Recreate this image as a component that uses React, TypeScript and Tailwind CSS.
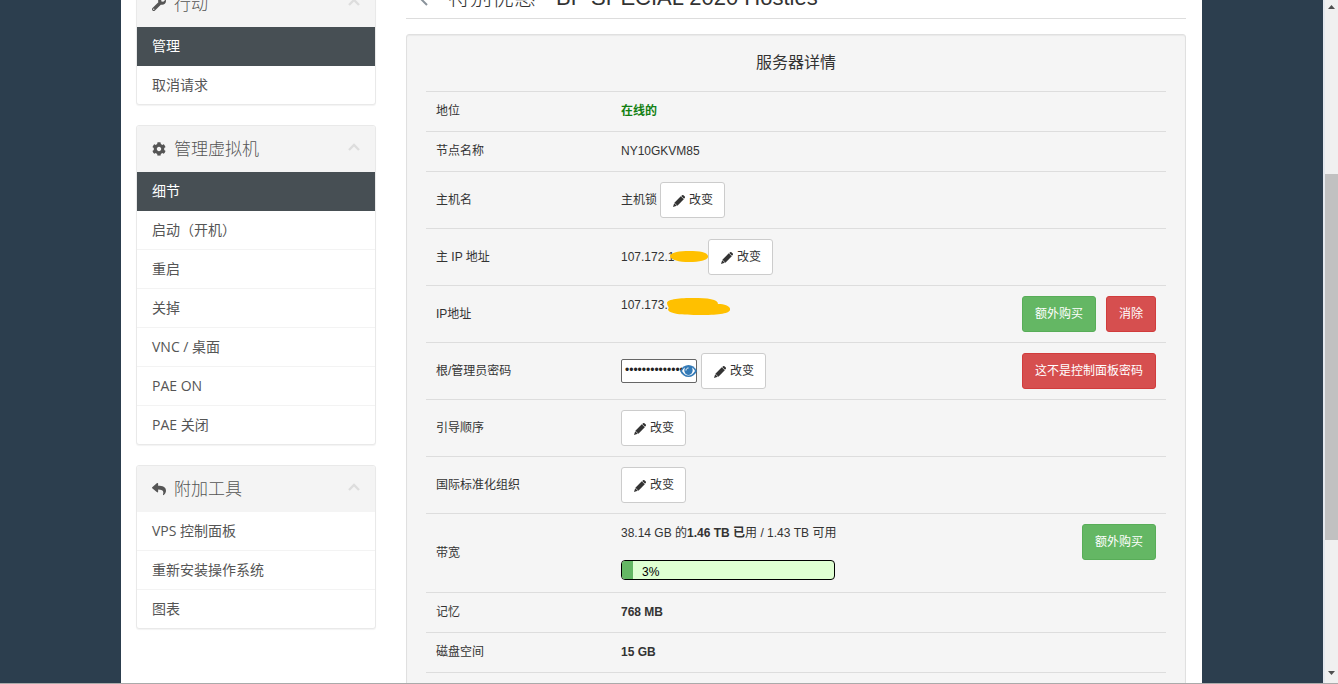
import React from 'react';
import { FaCog, FaReply, FaWrench } from 'react-icons/fa';

interface SidebarPanelProps {
  icon: React.ReactNode;
  title: string;
  items: string[];
  active?: string;
}

const SidebarPanel: React.FC<SidebarPanelProps> = ({ icon, title, items, active }) => (
  <section className="mb-5 overflow-hidden rounded-[3px] border border-[#e9e9e9] bg-white shadow-[0_1px_1px_rgba(0,0,0,0.05)]">
    <button
      type="button"
      className="flex h-[46px] w-full items-center bg-[#f4f4f4] px-[15px] text-left text-[#555]"
    >
      {icon}
      <span className="ml-2 flex-1 text-[17px] leading-5 font-light">{title}</span>
      <svg className="mb-1 h-2 w-3" viewBox="0 0 12 8" fill="none" stroke="#ddd" strokeWidth="2.4">
        <path d="M1 7l5-5 5 5" />
      </svg>
    </button>
    <ul>
      {items.map((item) => (
        <li
          key={item}
          className={
            item === active
              ? 'border-b border-[#474f54] bg-[#474f54] text-white last:border-b-0'
              : 'border-b border-[#f3f3f3] text-[#555] last:border-b-0'
          }
        >
          <a href="#" className="flex h-[38px] items-center px-[15px] text-sm">
            {item}
          </a>
        </li>
      ))}
    </ul>
  </section>
);

const PencilIcon: React.FC = () => (
  <svg className="h-3 w-3" viewBox="0 0 12 12" fill="currentColor">
    <path d="M0 12l1.200-3.800 2.600 2.600z" />
    <path d="M1.400 7.700L7.800 1.300l3 3-6.400 6.400z" />
    <path d="M8.200 1l1-.8c.4-.3.8-.3 1.200 0l1.400 1.400c.3.400.3.800 0 1.200l-.8 1z" />
  </svg>
);

const ChangeButton: React.FC = () => (
  <button
    type="button"
    className="flex h-9 items-center gap-1 rounded-[3px] border border-[#ccc] bg-white pt-px pr-[11px] pl-3 text-[#333]"
  >
    <PencilIcon />
    改变
  </button>
);

const BuyButton: React.FC = () => (
  <button
    type="button"
    className="h-9 rounded-[3px] border border-[#58ad58] bg-[#64b764] px-3 text-white"
  >
    额外购买
  </button>
);

const DangerButton: React.FC<{ children: React.ReactNode }> = ({ children }) => (
  <button
    type="button"
    className="h-9 rounded-[3px] border border-[#d13c3c] bg-[#d64f4f] px-3 text-white"
  >
    {children}
  </button>
);

const Row: React.FC<{ label: string; children: React.ReactNode }> = ({ label, children }) => (
  <tr className="border-t border-[#ddd]">
    <th scope="row" className="w-1/4 px-[10px] py-[10px] text-left font-normal">
      {label}
    </th>
    <td className="px-[10px] py-[10px]">{children}</td>
  </tr>
);

const App: React.FC = () => {
  const usage = 5;

  return (
    <div className="flex h-screen overflow-hidden border-b border-[#aaa] bg-[#2c3e4e] font-['Open_Sans','Noto_Sans_CJK_SC',sans-serif]">
      <div className="min-w-0 flex-1 overflow-hidden">
        <div className="mx-auto flex min-h-screen max-w-[1081px] gap-[30px] bg-white pr-4 pl-[15px]">
          {/* Sidebar */}
          <aside className="-mt-5 w-60 shrink-0">
            <SidebarPanel
              icon={<FaWrench className="h-[14px] w-[14px]" />}
              title="行动"
              items={['管理', '取消请求']}
              active="管理"
            />
            <SidebarPanel
              icon={<FaCog className="h-[14px] w-[14px]" />}
              title="管理虚拟机"
              items={['细节', '启动（开机）', '重启', '关掉', 'VNC / 桌面', 'PAE ON', 'PAE 关闭']}
              active="细节"
            />
            <SidebarPanel
              icon={<FaReply className="h-[14px] w-[14px]" />}
              title="附加工具"
              items={['VPS 控制面板', '重新安装操作系统', '图表']}
            />
          </aside>

          {/* Details */}
          <main className="-mt-5 min-w-0 flex-1 font-['Liberation_Sans','Noto_Sans_CJK_SC',sans-serif] text-[#333]">
            <header className="flex h-[39px] items-start gap-[18px] border-b border-[#ddd] pl-3">
              <a href="#" aria-label="返回" className="flex h-9 items-center text-[#8a939b]">
                <svg className="h-4 w-3" viewBox="0 0 12 16" fill="none" stroke="currentColor" strokeWidth="2">
                  <path d="M9 1L2 8l7 7" />
                </svg>
              </a>
              <h1 className="flex gap-5 text-[22px] leading-9">
                <span className="font-light">特别优惠</span>
                <span>BP SPECIAL 2020 Hosties</span>
              </h1>
            </header>

            <section className="mt-[15px] rounded-[3px] border border-[#e0e0e0] bg-[#f5f5f5] px-[19px] pb-5 shadow-[inset_0_1px_1px_rgba(0,0,0,0.05)]">
              <h2 className="flex h-14 items-center justify-center text-base">服务器详情</h2>
              <table className="w-full table-fixed border-collapse text-xs leading-[19px]">
                <tbody>
                  <Row label="地位">
                    <strong className="text-[#128012]">在线的</strong>
                  </Row>
                  <Row label="节点名称">NY10GKVM85</Row>
                  <Row label="主机名">
                    <div className="flex items-center gap-[3px]">
                      <span>主机锁</span>
                      <ChangeButton />
                    </div>
                  </Row>
                  <Row label="主 IP 地址">
                    <div className="flex items-center">
                      <span className="relative w-[87px]">
                        107.172.1
                        <svg className="absolute top-[3px] left-[49px] h-3 w-[38px]" viewBox="0 0 38 12" fill="#ffc000">
                          <path d="M0 5C1 1 10 0 19 0c11 0 18 1 19 5s-7 6-19 6C9 11 1 9 0 5z" />
                        </svg>
                      </span>
                      <ChangeButton />
                    </div>
                  </Row>
                  <Row label="IP地址">
                    <div className="flex items-start justify-between">
                      <span className="relative">
                        107.173.
                        <svg className="absolute top-[2px] left-[46px] h-[18px] w-[63px]" viewBox="0 0 63 18" fill="#ffc000">
                          <path d="M0 5C0 1 14 0 26 0c15 0 25 1 25 6 8 0 13 3 12 6-1 4-14 5-30 5C15 17 1 16 1 11c2-1-1-3-1-6z" />
                        </svg>
                      </span>
                      <div className="flex gap-[10px]">
                        <BuyButton />
                        <DangerButton>消除</DangerButton>
                      </div>
                    </div>
                  </Row>
                  <Row label="根/管理员密码">
                    <div className="flex items-center gap-1">
                      <div className="relative w-[76px]">
                        <input
                          type="password"
                          aria-label="根/管理员密码"
                          readOnly
                          value="aaaaaaaaaaaaaaaa"
                          className="block h-6 w-full rounded-[2px] border border-[#666] bg-white px-[3px] pb-[3px] text-xs text-[#222]"
                        />
                        <svg className="absolute top-[6px] right-0 h-3 w-[17px]" viewBox="0 0 17 12">
                          <path d="M0 6c2-4 5-6 8.500-6S15 2 17 6c-2 4-5 6-8.500 6S2 10 0 6z" fill="#337ab7" />
                          <path d="M2 6c1-2 2-3 3-3.500C3.500 6 5 10 8.500 10s5-4 3.500-7.500C13 3 14 4 15 6c-2 3-4 4.500-6.500 4.500S4 9 2 6z" fill="#fff" />
                          <circle cx="8.500" cy="5.500" r="3.700" fill="#337ab7" />
                          <path d="M6 5.500C6 4 7 3 8.500 3" fill="none" stroke="#fff" />
                        </svg>
                      </div>
                      <ChangeButton />
                      <div className="ml-auto">
                        <DangerButton>这不是控制面板密码</DangerButton>
                      </div>
                    </div>
                  </Row>
                  <Row label="引导顺序">
                    <ChangeButton />
                  </Row>
                  <Row label="国际标准化组织">
                    <ChangeButton />
                  </Row>
                  <Row label="带宽">
                    <div className="flex items-start justify-between pb-[2px]">
                      <div>
                        <p>
                          38.14 GB 的<strong>1.46 TB 已</strong>用 / 1.43 TB 可用
                        </p>
                        <div className="relative mt-[17px] h-5 w-[214px] overflow-hidden rounded-[4px] border border-black bg-[#dfffd2]">
                          <div className="h-full bg-[#64b764]" style={{ width: `${usage}%` }} />
                          <span className="absolute top-[2px] left-5 text-black">3%</span>
                        </div>
                      </div>
                      <BuyButton />
                    </div>
                  </Row>
                  <Row label="记忆">
                    <strong>768 MB</strong>
                  </Row>
                  <Row label="磁盘空间">
                    <strong>15 GB</strong>
                  </Row>
                  <Row label="虚拟化类型">KVM</Row>
                </tbody>
              </table>
            </section>
          </main>
        </div>
      </div>

      {/* Scrollbar */}
      <div className="flex w-[15px] shrink-0 flex-col items-center border-l-2 border-[#e4e8ee] bg-[#f0f0f0] py-[5px]">
        <svg className="h-1 w-[7px]" viewBox="0 0 7 4" fill="#505050">
          <path d="M0 4l3.500-4L7 4z" />
        </svg>
        <div className="mt-[165px] h-[366px] w-full bg-[#c1c1c1]" />
        <svg className="mt-auto mb-[3px] h-1 w-[7px]" viewBox="0 0 7 4" fill="#505050">
          <path d="M0 0l3.500 4L7 0z" />
        </svg>
      </div>
    </div>
  );
};

export default App;
